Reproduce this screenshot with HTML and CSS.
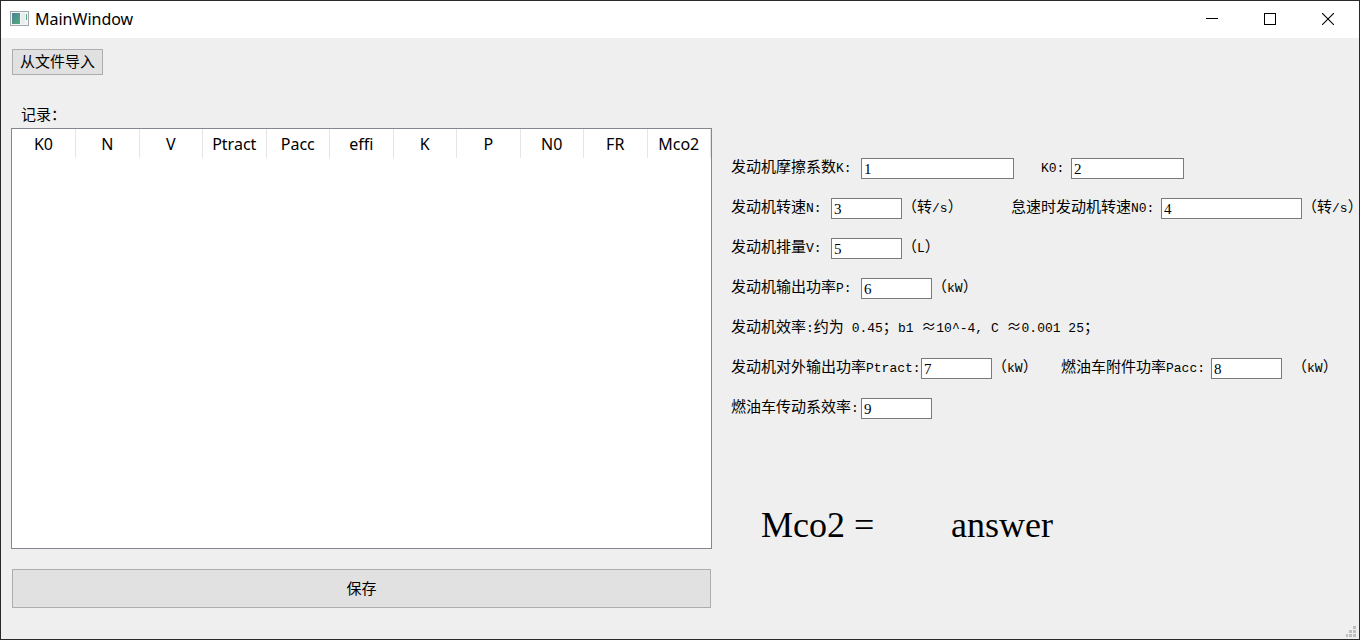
FILE: index.html
```html
<!DOCTYPE html>
<html lang="zh-CN">
<head>
<meta charset="utf-8">
<title>MainWindow</title>
<link rel="stylesheet" href="styles.css">
</head>
<body>
<div class="window">
  <header class="titlebar">
    <svg class="app-icon" width="19" height="15" viewBox="0 0 19 15" aria-hidden="true">
      <defs><linearGradient id="pane" x1="0" y1="0" x2="1" y2="1"><stop offset="0" stop-color="#4d7f9c"/><stop offset="1" stop-color="#4fae78"/></linearGradient></defs>
      <rect x=".5" y=".5" width="18" height="14" fill="#f4f5f6" stroke="#a4a9ad"/>
      <rect x="2" y="2" width="8" height="11" fill="url(#pane)"/>
      <rect x="11" y="2" width="4" height="11" fill="#e9edef"/>
      <rect x="16" y="3" width="1" height="6" fill="#5aa68c"/>
    </svg>
    <h1 class="title">MainWindow</h1>
    <div class="controls">
      <button class="control" type="button" aria-label="最小化"><svg width="12" height="12" viewBox="0 0 12 12"><path d="M0 5.5h12" stroke="#000"/></svg></button>
      <button class="control" type="button" aria-label="最大化"><svg width="12" height="12" viewBox="0 0 12 12"><rect x=".5" y=".5" width="11" height="11" fill="none" stroke="#000"/></svg></button>
      <button class="control" type="button" aria-label="关闭"><svg width="12" height="12" viewBox="0 0 12 12"><path d="M0 0l12 12M12 0L0 12" stroke="#000" stroke-width="1.1"/></svg></button>
    </div>
  </header>
  <main class="content">
    <section class="records">
      <button class="button import" type="button">从文件导入</button>
      <h2 class="caption">记录：</h2>
      <div class="table-view">
        <table class="table">
          <thead>
            <tr><th>K0</th><th>N</th><th>V</th><th>Ptract</th><th>Pacc</th><th>effi</th><th>K</th><th>P</th><th>N0</th><th>FR</th><th>Mco2</th></tr>
          </thead>
        </table>
      </div>
      <button class="button save" type="button">保存</button>
    </section>
    <form class="form">
      <div class="row">
        <div class="field lead-wide">
          <label class="label w-130" for="k">发动机摩擦系数<span class="latin">K:</span></label>
          <input class="input input-xl" id="k" type="text" value="1">
        </div>
        <div class="field">
          <label class="label w-30" for="k0"><span class="latin">K0:</span></label>
          <input class="input input-md" id="k0" type="text" value="2">
        </div>
      </div>
      <div class="row">
        <div class="field lead">
          <label class="label w-100" for="n">发动机转速<span class="latin">N:</span></label>
          <input class="input" id="n" type="text" value="3">
          <span class="unit">（转<span class="latin">/s</span>）</span>
        </div>
        <div class="field">
          <label class="label w-150" for="n0">怠速时发动机转速<span class="latin">N0:</span></label>
          <input class="input input-lg" id="n0" type="text" value="4">
          <span class="unit">（转<span class="latin">/s</span>）</span>
        </div>
      </div>
      <div class="row">
        <div class="field">
          <label class="label w-100" for="v">发动机排量<span class="latin">V:</span></label>
          <input class="input" id="v" type="text" value="5">
          <span class="unit">（<span class="latin">L</span>）</span>
        </div>
      </div>
      <div class="row">
        <div class="field">
          <label class="label w-130" for="p">发动机输出功率<span class="latin">P:</span></label>
          <input class="input" id="p" type="text" value="6">
          <span class="unit">（<span class="latin">kW</span>）</span>
        </div>
      </div>
      <div class="row">
        <p class="label">发动机效率<span class="latin">:</span>约为<span class="latin"> 0.45</span>；<span class="latin">b1 </span>≈<span class="latin">10^-4, C </span>≈<span class="latin">0.001 25</span>；</p>
      </div>
      <div class="row">
        <div class="field lead-full">
          <label class="label w-190" for="ptract">发动机对外输出功率<span class="latin">Ptract:</span></label>
          <input class="input" id="ptract" type="text" value="7">
          <span class="unit">（<span class="latin">kW</span>）</span>
        </div>
        <div class="field">
          <label class="label w-150" for="pacc">燃油车附件功率<span class="latin">Pacc:</span></label>
          <input class="input" id="pacc" type="text" value="8">
          <span class="unit unit-far">（<span class="latin">kW</span>）</span>
        </div>
      </div>
      <div class="row">
        <div class="field">
          <label class="label w-130" for="eff">燃油车传动系效率<span class="latin">:</span></label>
          <input class="input" id="eff" type="text" value="9">
        </div>
      </div>
      <div class="result">
        <label class="result-name" for="answer">Mco2 =</label>
        <output id="answer">answer</output>
      </div>
    </form>
  </main>
  <svg class="grip" width="10" height="11" viewBox="0 0 10 11" aria-hidden="true">
    <path fill="#bfbfbf" d="M7 0h3v3h-3zM3 4h3v3h-3zM7 4h3v3h-3zM0 8h2v3h-2zM3 8h3v3h-3zM7 8h3v3h-3z"/>
  </svg>
</div>
</body>
</html>
```
FILE: styles.css
```css
* { box-sizing: border-box; }

body {
  margin: 0;
  font: 15px/20px "Noto Sans CJK SC", sans-serif;
  color: #000;
}

.window {
  position: relative;
  display: flex;
  flex-direction: column;
  min-height: 100vh;
  border: 1px solid #2a282b;
  background: #efefef;
}

.titlebar {
  display: flex;
  align-items: center;
  height: 37px;
  padding: 0 2px 2px 9px;
  background: #fff;
}

.title {
  margin: 0 0 0 6px;
  font: 16px/20px "Noto Sans", sans-serif;
}

.controls {
  display: flex;
  align-self: stretch;
  margin-left: auto;
}

.control {
  display: flex;
  align-items: center;
  justify-content: center;
  width: 58px;
  padding: 0;
  border: 0;
  background: transparent;
}

.content {
  flex: 1;
  display: grid;
  grid-template-columns: minmax(0, 1fr) 628px;
  column-gap: 19px;
  padding-left: 10px;
}

.records {
  display: flex;
  flex-direction: column;
  padding: 11px 0 31px;
}

.button {
  padding: 0 0 2px;
  border: 1px solid #adadad;
  background: #e1e1e1;
  color: #000;
  font: inherit;
}

.import {
  width: 91px;
  height: 26px;
  margin-left: 1px;
}

.caption {
  margin: 29px 0 4px 10px;
  font: inherit;
}

.table-view {
  flex: 1;
  border: 1px solid #828790;
  background: #fff;
}

.table {
  width: 100%;
  table-layout: fixed;
  border-collapse: collapse;
}

.table th {
  height: 29px;
  padding: 0;
  border-right: 1px solid #e5e5e5;
  font: 16px/20px "Noto Sans", sans-serif;
}

.save {
  height: 39px;
  margin: 20px 1px 0;
}

.form { padding-top: 120px; }

.row {
  display: flex;
  height: 21px;
  margin-bottom: 19px;
}

.field {
  display: flex;
  flex-shrink: 0;
}

.lead { width: 280px; }
.lead-wide { width: 310px; }
.lead-full { width: 330px; }

.label, .unit {
  margin: 0;
  line-height: 16px;
  white-space: pre;
}

.w-30 { width: 30px; }
.w-100 { width: 100px; }
.w-130 { width: 130px; }
.w-150 { width: 150px; }
.w-190 { width: 190px; }

.unit-far { margin-left: 10px; }

.latin {
  font-family: "Liberation Mono", monospace;
  font-size: 13px;
}

.input {
  width: 71px;
  height: 21px;
  padding: 2px 2px 0;
  border: 1px solid #7a7a7a;
  background: #fff;
  color: #000;
  font: 15px/18px "Liberation Serif", serif;
}

.input-md { width: 113px; }
.input-lg { width: 141px; }
.input-xl { width: 153px; }

.result {
  display: flex;
  padding: 67px 0 0 30px;
  font: 36px/40px "Liberation Serif", serif;
}

.result-name { width: 190px; }

.grip {
  position: absolute;
  right: 3px;
  bottom: 2px;
}
```
